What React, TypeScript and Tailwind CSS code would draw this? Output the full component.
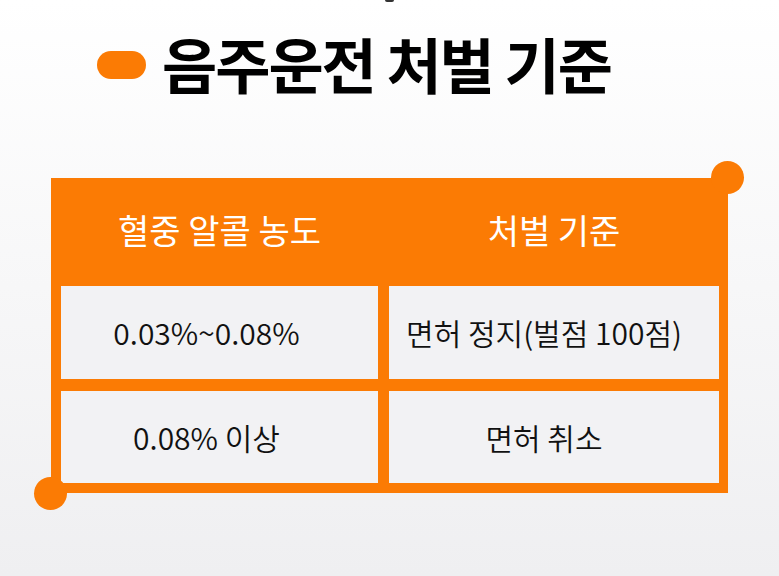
const ORANGE = 'bg-[#fb7b04]';

const rows = [
  ['0.03%~0.08%', '면허 정지(벌점 100점)'],
  ['0.08% 이상', '면허 취소'],
];

export default function App() {
  return (
    <div
      className="relative w-[779px] h-[576px] overflow-hidden bg-gradient-to-b from-white to-[#efeff1]"
      style={{ fontFamily: '"Noto Sans CJK KR", "Noto Sans", sans-serif' }}
    >
      {/* cut-off glyph at the very top */}
      <div className="absolute left-[385px] top-0 h-[2px] w-[9px] rounded-b-full bg-[#333]" />

      <div className="flex items-center h-[60px] mt-[35px] pl-[97px] gap-[16px]">
        <div className={`w-[49px] h-[28px] rounded-full ${ORANGE}`} />
        <h1 className="text-[60px] leading-none font-bold text-black tracking-[-2px] pb-[4px]">
          음주운전 처벌 기준
        </h1>
      </div>

      <div className={`relative ml-[51px] mt-[83px] w-[677px] ${ORANGE} pl-[10px] pr-[9px] pb-[10px]`}>
        <div className="absolute -right-[16px] -top-[17px] w-[33px] h-[33px] rounded-full bg-[#fb7b04]" />
        <div className="absolute -left-[17px] -bottom-[17px] w-[33px] h-[33px] rounded-full bg-[#fb7b04]" />

        <div className="grid grid-cols-[317px_330px] gap-x-[11px]">
          <div className="h-[108px] pb-[6px] flex items-center justify-center text-white text-[34px] font-normal">혈중 알콜 농도</div>
          <div className="h-[108px] pb-[6px] flex items-center justify-center text-white text-[34px] font-normal">처벌 기준</div>
        </div>

        <div className="grid grid-cols-[317px_330px] grid-rows-[93px_92px] gap-x-[11px] gap-y-[12px]">
          {rows.map(([a, b]) => (
            <>
              <div key={a} className="bg-[#f2f2f4] flex items-center justify-center pr-[26px] text-[30px] font-[350] text-[#111]">
                {a}
              </div>
              <div key={b} className="bg-[#f2f2f4] flex items-center justify-center pr-[20px] text-[30px] font-[350] text-[#111]">
                {b}
              </div>
            </>
          ))}
        </div>
      </div>
    </div>
  );
}
